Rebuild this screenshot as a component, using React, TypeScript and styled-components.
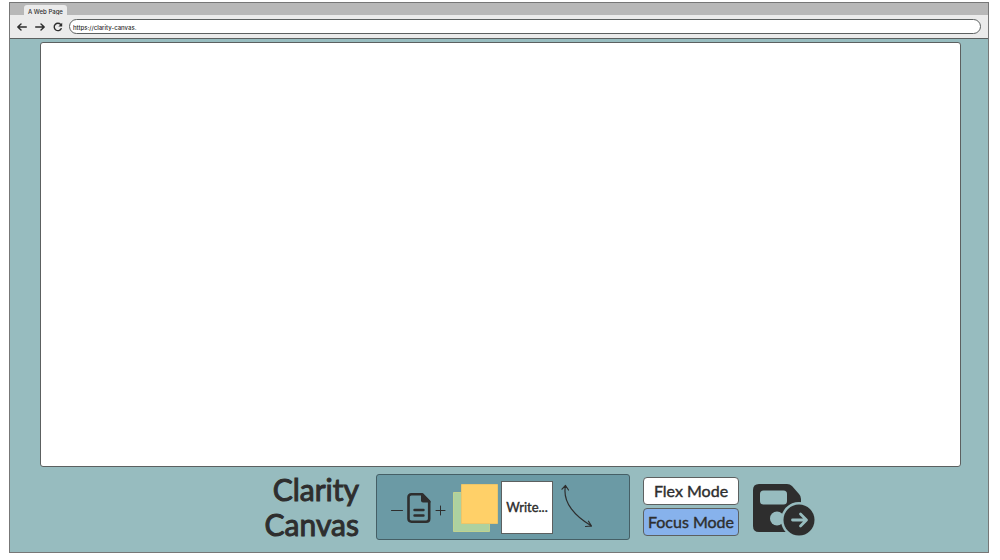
import React from "react";
import styled, { createGlobalStyle } from "styled-components";

const ink = "#2e2e2e";
const line = "#5c6060";

const GlobalStyle = createGlobalStyle`
  * { box-sizing: border-box; }
  body {
    margin: 0;
    background: #fff;
    color: ${ink};
    font-family: Lato, "Open Sans", sans-serif;
  }
  button, input { font: inherit; color: inherit; }
`;

const Browser = styled.div`
  display: flex;
  flex-direction: column;
  min-height: calc(100vh - 9px);
  margin: 0 11px 7px 9px;
  border: 1px solid #777;
  background: #97bcbf;
`;

const Page = styled.div`
  padding-top: 2px;
`;

const TabBar = styled.div`
  display: flex;
  align-items: flex-end;
  height: 12px;
  padding-left: 14px;
  background: #b8b8b8;
`;

const Tab = styled.div`
  height: 10px;
  padding: 0 4px;
  border-radius: 3px 3px 0 0;
  background: #ebebeb;
  font-family: Inter, sans-serif;
  font-size: 6px;
  font-weight: 500;
  line-height: 13px;
  white-space: nowrap;
`;

const AddressRow = styled.form`
  display: flex;
  align-items: center;
  gap: 8px;
  height: 24px;
  padding: 0 7px;
  border-bottom: 1px solid ${line};
  background: #ebebeb;
`;

const NavButton = styled.button`
  display: flex;
  flex: none;
  width: 10px;
  height: 10px;
  padding: 0;
  border: 0;
  background: none;

  svg { width: 10px; height: 10px; }
`;

const Address = styled.input`
  flex: 1;
  min-width: 0;
  height: 15px;
  margin-left: -2px;
  padding: 1px 3px 0;
  border: 1px solid ${line};
  border-radius: 8px;
  background: #fff;
  font-family: Inter, sans-serif;
  font-size: 6px;
  font-weight: 500;
`;

const Board = styled.main`
  flex: 1;
  min-height: 200px;
  margin: 3px 27px 0 30px;
  border: 1px solid ${line};
  border-radius: 3px;
  background: #fff;
`;

const Footer = styled.footer`
  display: flex;
  justify-content: center;
  align-items: center;
  padding: 5px 0 10px 76px;
`;

const Title = styled.h1`
  width: 100px;
  margin: 0 17px 0 0;
  font-size: 30px;
  font-weight: 400;
  line-height: 35px;
  text-align: right;
  -webkit-text-stroke: 1px ${ink};
`;

const Palette = styled.div`
  display: flex;
  align-items: center;
  width: 254px;
  height: 66px;
  padding-left: 14px;
  border: 1px solid #455f66;
  border-radius: 3px;
  background: #6b9aa5;
`;

const Tool = styled.button`
  display: flex;
  flex: none;
  padding: 0;
  border: 0;
  background: none;
`;

const ZoomTools = styled.div`
  display: flex;
  align-items: center;
  gap: 4px;
  margin: 2px 6px 0 0;
`;

const NotesTool = styled(Tool)`
  margin-top: 2px;
`;

const SaveTool = styled(Tool)`
  margin-top: 6px;
`;

const WriteCard = styled.button`
  width: 52px;
  height: 53px;
  margin: 0 8px 0 3px;
  padding: 0;
  border: 1px solid ${line};
  background: #fff;
  font-size: 13px;
  -webkit-text-stroke: 0.4px ${ink};
`;

const Modes = styled.div`
  display: flex;
  flex-direction: column;
  gap: 3px;
  margin: 0 14px 2px 13px;
`;

const ModeButton = styled.button<{ $active?: boolean }>`
  width: 96px;
  height: 28px;
  padding: 0;
  border: 1px solid ${line};
  border-radius: 4px;
  background: ${(p) => (p.$active ? "#87b2ec" : "#fff")};
  font-size: 16px;
  line-height: 24px;
  white-space: nowrap;
  -webkit-text-stroke: 0.4px ${ink};
`;

const stroke = {
  fill: "none",
  stroke: ink,
  strokeLinecap: "round" as const,
  strokeLinejoin: "round" as const,
};

export default function App() {
  return (
    <Page>
      <GlobalStyle />
      <Browser>
        <TabBar>
          <Tab>A Web Page</Tab>
        </TabBar>
        <AddressRow onSubmit={(e) => e.preventDefault()}>
          <NavButton type="button" aria-label="Back">
            <svg viewBox="0 0 10 10"><path {...stroke} strokeWidth="1.4" d="M9.3 5H.9M4 1.9.8 5 4 8.1" /></svg>
          </NavButton>
          <NavButton type="button" aria-label="Forward">
            <svg viewBox="0 0 10 10"><path {...stroke} strokeWidth="1.4" d="M.7 5h8.4M6 1.9 9.2 5 6 8.1" /></svg>
          </NavButton>
          <NavButton type="button" aria-label="Reload">
            <svg viewBox="0 0 10 10">
              <path {...stroke} strokeWidth="1.4" d="M8.2 6.7A3.7 3.7 0 1 1 7.7 2.5" />
              <path fill={ink} d="M9.2.8v3.8H5.4z" />
            </svg>
          </NavButton>
          <Address aria-label="Address" defaultValue="https://clarity-canvas." />
        </AddressRow>
        <Board aria-label="Canvas" />
        <Footer>
          <Title>Clarity Canvas</Title>
          <Palette>
            <ZoomTools>
              <Tool aria-label="Remove page">
                <svg width="12" height="16" viewBox="0 0 12 16"><path {...stroke} d="M.5 10.500h11" /></svg>
              </Tool>
              <Tool aria-label="Page">
                <svg width="24" height="32" viewBox="0 0 24 32">
                  <path {...stroke} strokeWidth="2.6" d="M4.500 2.300h10.800l6.900 7v17.400q0 3-3 3H4.500q-3 0-3-3V5.300q0-3 3-3z" />
                  <path fill={ink} d="M14 1.500h2l7.500 8V10.500H16q-2 0-2-2z" />
                  <path {...stroke} strokeWidth="2.400" d="M7.500 18h9M7.500 23.500h9" />
                </svg>
              </Tool>
              <Tool aria-label="Add page">
                <svg width="11" height="16" viewBox="0 0 11 16"><path {...stroke} d="M1 10.500h9M5.500 6v9" /></svg>
              </Tool>
            </ZoomTools>
            <NotesTool aria-label="Sticky notes">
              <svg width="46" height="50" viewBox="0 0 46 50">
                <path fill="#add1a0" stroke="#c1d28f" d="M1.500 9.500h36v39h-36z" />
                <path fill="#ffd068" stroke="#edc568" d="M9.500 1.500h36v39h-36z" />
              </svg>
            </NotesTool>
            <WriteCard>Write...</WriteCard>
            <Tool aria-label="Connector">
              <svg width="32" height="46" viewBox="0 0 32 46">
                <path {...stroke} strokeWidth="1.200" d="M4.500 1.500C1 19 15 33 30.500 42M1 5.200l3.500-3.700 3 4.500M24.500 42.500l6-.5-3-4.800" />
              </svg>
            </Tool>
          </Palette>
          <Modes>
            <ModeButton>Flex Mode</ModeButton>
            <ModeButton $active>Focus Mode</ModeButton>
          </Modes>
          <SaveTool aria-label="Save and continue">
            <svg width="62" height="52" viewBox="0 0 62 52">
              <path fill={ink} d="M6 0h28q3 0 5 2l7 8q2 2 2 5v33H6q-6 0-6-6V6q0-6 6-6z" />
              <rect x="7" y="6.500" width="27" height="14" rx="3.500" fill="#97bcbf" />
              <circle cx="24" cy="34.500" r="7" fill="#97bcbf" />
              <circle cx="46" cy="36" r="18" fill="#97bcbf" />
              <circle cx="46" cy="36" r="15.500" fill={ink} />
              <path fill="none" stroke="#97bcbf" strokeWidth="2.800" strokeLinecap="round" strokeLinejoin="round" d="M39.500 36h13.500M47.500 30l6 6-6 6" />
            </svg>
          </SaveTool>
        </Footer>
      </Browser>
    </Page>
  );
}
